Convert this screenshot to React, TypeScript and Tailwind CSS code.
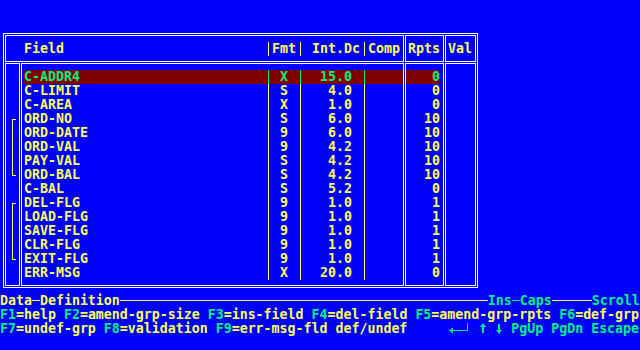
import React from "react";

type Row = { name: string; fmt: string; len: string; rpts: string; hl?: boolean; br?: "top" | "mid" | "bot" };

const rows: Row[] = [
  { name: "C-ADDR4", fmt: "X", len: "15.0", rpts: "0", hl: true },
  { name: "C-LIMIT", fmt: "S", len: "4.0", rpts: "0" },
  { name: "C-AREA", fmt: "X", len: "1.0", rpts: "0" },
  { name: "ORD-NO", fmt: "S", len: "6.0", rpts: "10", br: "top" },
  { name: "ORD-DATE", fmt: "9", len: "6.0", rpts: "10", br: "mid" },
  { name: "ORD-VAL", fmt: "9", len: "4.2", rpts: "10", br: "mid" },
  { name: "PAY-VAL", fmt: "S", len: "4.2", rpts: "10", br: "mid" },
  { name: "ORD-BAL", fmt: "S", len: "4.2", rpts: "10", br: "bot" },
  { name: "C-BAL", fmt: "S", len: "5.2", rpts: "0" },
  { name: "DEL-FLG", fmt: "9", len: "1.0", rpts: "1", br: "top" },
  { name: "LOAD-FLG", fmt: "9", len: "1.0", rpts: "1", br: "mid" },
  { name: "SAVE-FLG", fmt: "9", len: "1.0", rpts: "1", br: "mid" },
  { name: "CLR-FLG", fmt: "9", len: "1.0", rpts: "1", br: "mid" },
  { name: "EXIT-FLG", fmt: "9", len: "1.0", rpts: "1", br: "bot" },
  { name: "ERR-MSG", fmt: "X", len: "20.0", rpts: "0" },
];

function Bar() {
  return (
    <span className="block w-2 h-[14px] flex-none">
      <span className="block ml-1 w-px h-full bg-current" />
    </span>
  );
}

function Bracket({ kind }: { kind?: "top" | "mid" | "bot" }) {
  return (
    <div className="flex flex-col w-2 h-[14px] flex-none">
      {kind === "top" && <div className="ml-1 mt-[7px] h-[7px] w-1 border-l border-t border-[#ffff55]" />}
      {kind === "mid" && <div className="ml-1 h-full w-px bg-[#ffff55]" />}
      {kind === "bot" && <div className="ml-1 h-2 w-1 border-l border-b border-[#ffff55]" />}
    </div>
  );
}

function G({ children }: { children: React.ReactNode }) {
  return <span className="text-[#00f080]">{children}</span>;
}
function Y({ children }: { children: React.ReactNode }) {
  return <span className="text-[#ffff55]">{children}</span>;
}

function EnterIcon() {
  return (
    <svg width="24" height="14" viewBox="0 0 24 14" className="flex-none">
      <polygon points="2,8.5 6,5.5 6,11.5" fill="#00f080" />
      <rect x="6" y="8" width="15" height="1" fill="#00f080" />
      <rect x="20" y="1" width="1" height="8" fill="#00f080" />
    </svg>
  );
}

function Arrow({ down }: { down?: boolean }) {
  return (
    <svg width="8" height="14" viewBox="0 0 8 14" className="flex-none">
      <g transform={down ? "rotate(180 4 6.5)" : undefined}>
        <polygon points="4,1 7,5 1,5" fill="#00f080" />
        <rect x="3" y="4" width="2" height="7" fill="#00f080" />
      </g>
    </svg>
  );
}

export default function App() {
  return (
    <div className="w-[640px] h-[350px] bg-[#0000ff] overflow-hidden flex flex-col font-['DejaVu_Sans_Mono',monospace] font-bold text-[13.28px] leading-[14px] text-[#ffff55]">
      {/* table frame */}
      <div className="ml-[3px] mt-[33px] w-[475px] h-[255px] border border-white p-px flex flex-col gap-px flex-none">
        {/* header */}
        <div className="flex gap-px h-[27px]">
          <div className="w-[399px] h-full border border-white pl-[18px] pt-[6px]">
            <div className="flex h-[14px] whitespace-pre">
              <span className="w-[240px] flex-none">Field</span>
              <Bar />
              <span className="w-[24px] flex-none">Fmt</span>
              <Bar />
              <span className="w-[56px] flex-none"> Int.Dc</span>
              <Bar />
              <span className="w-[32px] flex-none">Comp</span>
            </div>
          </div>
          <div className="w-[39px] h-full border border-white pl-[2px] pt-[6px] whitespace-pre">Rpts</div>
          <div className="w-[31px] h-full border border-white pl-[2px] pt-[6px] whitespace-pre">Val</div>
        </div>
        {/* body */}
        <div className="flex gap-px h-[223px]">
          <div className="w-[15px] h-full border border-white pl-[2px] pt-[6px]">
            {rows.map((r, i) => (
              <Bracket key={i} kind={r.br} />
            ))}
          </div>
          <div className="w-[383px] h-full border border-white pl-[2px] pt-[6px]">
            {rows.map((r, i) => (
              <div
                key={i}
                className={`flex h-[14px] whitespace-pre ${r.hl ? "bg-[#800000] text-[#00f080]" : "text-[#ffff55]"}`}
              >
                <span className="w-[240px] flex-none">{r.name}</span>
                <Bar />
                <span className="w-[24px] flex-none text-center">{r.fmt}</span>
                <Bar />
                <span className="w-[48px] flex-none text-right">{r.len}</span>
                <span className="w-2 flex-none" />
                <Bar />
                <span className="flex-1" />
              </div>
            ))}
          </div>
          <div className="w-[39px] h-full border border-white pt-[6px]">
            {rows.map((r, i) => (
              <div
                key={i}
                className={`w-[34px] h-[14px] text-right whitespace-pre ${r.hl ? "bg-[#800000] text-[#00f080]" : "text-[#ffff55]"}`}
              >
                {r.rpts}
              </div>
            ))}
          </div>
          <div className="w-[31px] h-full border border-white" />
        </div>
      </div>

      {/* status line */}
      <div className="mt-[6px] flex items-start h-[14px] whitespace-pre flex-none">
        <Y>Data</Y>
        <span className="w-2 h-px mt-[6px] bg-[#ffff55] flex-none" />
        <Y>Definition</Y>
        <span className="w-[368px] h-px mt-[6px] bg-[#ffff55] flex-none" />
        <G>Ins</G>
        <span className="w-2 h-px mt-[6px] bg-[#00f080] flex-none" />
        <G>Caps</G>
        <span className="w-[40px] h-px mt-[6px] bg-[#ffff55] flex-none" />
        <G>Scroll</G>
      </div>

      {/* function keys */}
      <div className="h-[14px] whitespace-pre flex-none">
        <G>F1</G><Y>=help </Y><G>F2</G><Y>=amend-grp-size </Y><G>F3</G><Y>=ins-field </Y>
        <G>F4</G><Y>=del-field </Y><G>F5</G><Y>=amend-grp-rpts </Y><G>F6</G><Y>=def-grp</Y>
      </div>
      <div className="flex h-[14px] whitespace-pre flex-none">
        <span>
          <G>F7</G><Y>=undef-grp </Y><G>F8</G><Y>=validation </Y><G>F9</G><Y>=err-msg-fld def/undef     </Y>
        </span>
        <EnterIcon />
        <span className="w-2 flex-none" />
        <Arrow />
        <span className="w-2 flex-none" />
        <Arrow down />
        <G> PgUp PgDn Escape</G>
      </div>
    </div>
  );
}
